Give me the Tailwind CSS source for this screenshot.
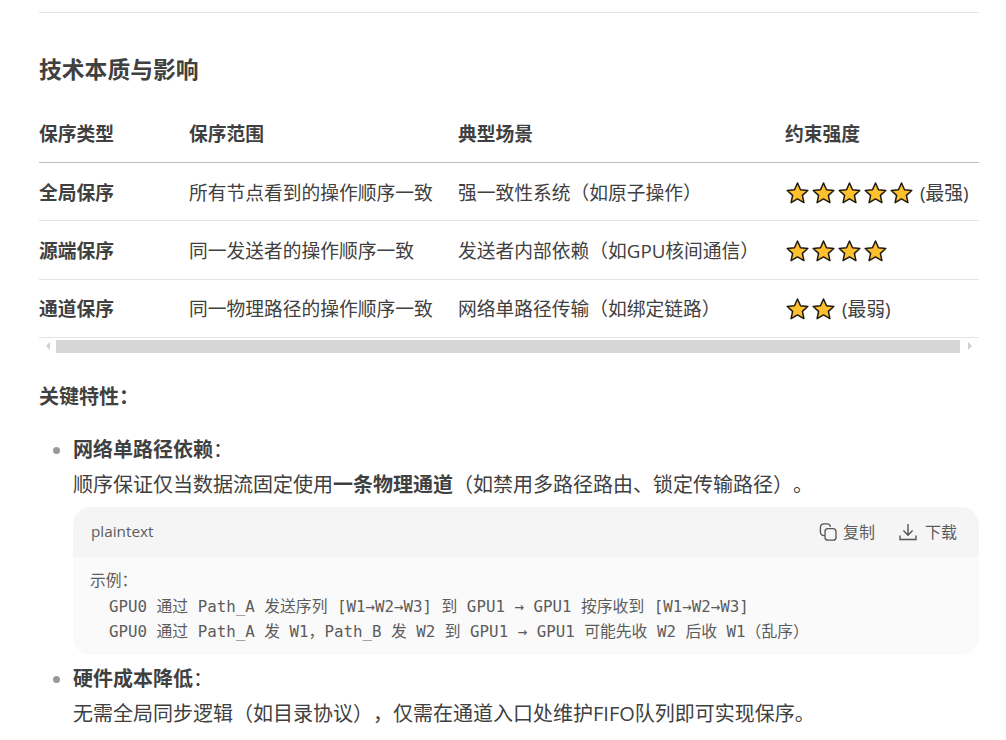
<!DOCTYPE html>
<html lang="zh-CN">
<head>
  <meta charset="UTF-8" />
  <title>技术本质与影响</title>
  <script src="https://cdn.jsdelivr.net/npm/@tailwindcss/browser@4"></script>
</head>
<body class="bg-white text-[#404040] h-[740px] overflow-hidden [text-spacing-trim:space-all] font-['Open_Sans','Noto_Sans_CJK_SC',sans-serif]">
  <main class="pl-[39px] pr-[27px] pt-[12px]">
    <hr class="border-t border-[#e5e5e5]" />

    <h3 class="mt-[41px] text-[22.8px] leading-[32px] font-bold">技术本质与影响</h3>

    <!-- table -->
    <table class="mt-[20px] w-full table-fixed border-collapse text-[18.75px]">
      <colgroup>
        <col class="w-[150px]" />
        <col class="w-[269px]" />
        <col class="w-[327px]" />
        <col />
      </colgroup>
      <thead>
        <tr class="h-[56px] border-b border-[#bdbdbd] text-left">
          <th class="font-bold">保序类型</th>
          <th class="font-bold">保序范围</th>
          <th class="font-bold">典型场景</th>
          <th class="font-bold">约束强度</th>
        </tr>
      </thead>
      <tbody>
        <tr class="h-[58.5px] border-b border-[#e5e5e5]">
          <td class="pt-[3px] font-bold">全局保序</td>
          <td class="pt-[3px]">所有节点看到的操作顺序一致</td>
          <td class="pt-[3px]">强一致性系统（如原子操作）</td>
          <td class="pt-[3px]">
            <div class="flex items-center">
              <svg class="w-[26px] h-[24px]" viewBox="0 0 26 24"><path id="star" d="M12.5 2l3 6.7 7.3.8-5.4 4.9 1.5 7.2-6.4-3.7-6.4 3.7 1.5-7.2-5.4-4.9 7.3-.8z" fill="#ffc02e" stroke="#1f1a10" stroke-width="1.5" stroke-linejoin="round"/></svg>
              <svg class="w-[26px] h-[24px]" viewBox="0 0 26 24"><use href="#star"/></svg>
              <svg class="w-[26px] h-[24px]" viewBox="0 0 26 24"><use href="#star"/></svg>
              <svg class="w-[26px] h-[24px]" viewBox="0 0 26 24"><use href="#star"/></svg>
              <svg class="w-[26px] h-[24px]" viewBox="0 0 26 24"><use href="#star"/></svg>
              <span class="ml-[5px]">(最强)</span>
            </div>
          </td>
        </tr>
        <tr class="h-[58.5px] border-b border-[#e5e5e5]">
          <td class="pt-[2px] font-bold">源端保序</td>
          <td class="pt-[2px]">同一发送者的操作顺序一致</td>
          <td class="pt-[2px]">发送者内部依赖（如GPU核间通信）</td>
          <td class="pt-[2px]">
            <div class="flex items-center">
              <svg class="w-[26px] h-[24px]" viewBox="0 0 26 24"><use href="#star"/></svg>
              <svg class="w-[26px] h-[24px]" viewBox="0 0 26 24"><use href="#star"/></svg>
              <svg class="w-[26px] h-[24px]" viewBox="0 0 26 24"><use href="#star"/></svg>
              <svg class="w-[26px] h-[24px]" viewBox="0 0 26 24"><use href="#star"/></svg>
            </div>
          </td>
        </tr>
        <tr class="h-[58.5px] border-b border-[#e5e5e5]">
          <td class="pt-[2px] font-bold">通道保序</td>
          <td class="pt-[2px]">同一物理路径的操作顺序一致</td>
          <td class="pt-[2px]">网络单路径传输（如绑定链路）</td>
          <td class="pt-[2px]">
            <div class="flex items-center">
              <svg class="w-[26px] h-[24px]" viewBox="0 0 26 24"><use href="#star"/></svg>
              <svg class="w-[26px] h-[24px]" viewBox="0 0 26 24"><use href="#star"/></svg>
              <span class="ml-[5px]">(最弱)</span>
            </div>
          </td>
        </tr>
      </tbody>
    </table>

    <!-- table scrollbar -->
    <div class="mt-[1px] h-[14px] flex items-center">
      <div class="w-[17px] flex justify-center"><div class="border-y-[4px] border-r-[4px] border-y-transparent border-r-[#cfcfcf]"></div></div>
      <div class="h-[13px] flex-1 bg-[#d6d6d6]"></div>
      <div class="w-[19px] flex justify-center"><div class="border-y-[4px] border-l-[4px] border-y-transparent border-l-[#cfcfcf]"></div></div>
    </div>

    <p class="mt-[28px] text-[20px] leading-[32px] font-bold">关键特性：</p>

    <ul class="mt-[19px] pl-[34px] text-[20px]">
      <li class="relative before:absolute before:left-[-20px] before:top-[15px] before:size-[7px] before:rounded-full before:bg-[#999999]">
        <p class="leading-[35px]"><strong class="font-bold">网络单路径依赖</strong>：</p>
        <p class="leading-[35px]">顺序保证仅当数据流固定使用<strong class="font-bold">一条物理通道</strong>（如禁用多路径路由、锁定传输路径）。</p>

        <div class="mt-[5px] rounded-[18px] overflow-hidden bg-[#fafafa]">
          <div class="h-[50px] bg-[#f5f5f5] pl-[18px] pr-[22px] flex items-center justify-between text-[#5c5c5c]">
            <span class="text-[15.3px] leading-[22px] pb-[2px]">plaintext</span>
            <div class="flex items-center text-[16px]">
              <svg class="w-[18px] h-[18px]" viewBox="0 0 18 18" fill="none" stroke="#555" stroke-width="1.3">
                <rect x="6" y="5.7" width="11" height="11.5" rx="3"/>
                <path d="M6 12.6h-.6A3.6 3.6 0 0 1 1.4 9V4.4A3.6 3.6 0 0 1 5 .9h3.2a3.2 3.2 0 0 1 3.2 3"/>
              </svg>
              <span class="ml-[6px]">复制</span>
              <svg class="ml-[24px] w-[18px] h-[18px]" viewBox="0 0 18 18" fill="none" stroke="#555" stroke-width="1.4">
                <path d="M9 1v11M4.4 7.6L9 12.2l4.6-4.6M1 12.5v4h16v-4"/>
              </svg>
              <span class="ml-[8px]">下载</span>
            </div>
          </div>
          <pre class="pt-[11px] pb-[10px] pl-[17px] text-[15.8px] leading-[25.5px] text-[#5c5c5c] font-['DejaVu_Sans_Mono','Noto_Sans_CJK_SC',monospace]">示例：
  GPU0 通过 Path_A 发送序列 [W1→W2→W3] 到 GPU1 → GPU1 按序收到 [W1→W2→W3]
  GPU0 通过 Path_A 发 W1，Path_B 发 W2 到 GPU1 → GPU1 可能先收 W2 后收 W1（乱序）</pre>
        </div>
      </li>
      <li class="relative mt-[6px] before:absolute before:left-[-20px] before:top-[15px] before:size-[7px] before:rounded-full before:bg-[#999999]">
        <p class="leading-[35px]"><strong class="font-bold">硬件成本降低</strong>：</p>
        <p class="leading-[35px]">无需全局同步逻辑（如目录协议），仅需在通道入口处维护FIFO队列即可实现保序。</p>
      </li>
    </ul>
  </main>
</body>
</html>
